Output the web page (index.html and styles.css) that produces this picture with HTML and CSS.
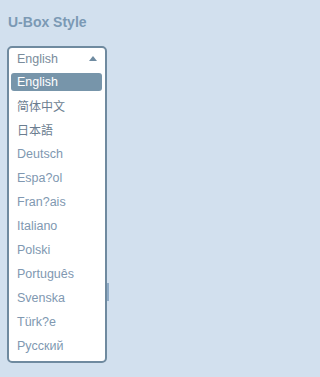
FILE: index.html
```html
<!DOCTYPE html>
<html>
<head>
<meta charset="utf-8">
<link rel="stylesheet" href="styles.css">
</head>
<body>
<div class="title">U-Box Style</div>
<div class="ubox">
  <div class="head"><span>English</span><span class="arrow"></span></div>
  <ul class="list">
    <li class="sel"><span>English</span></li>
    <li class="cjk"><span>简体中文</span></li>
    <li class="cjk"><span>日本語</span></li>
    <li><span>Deutsch</span></li>
    <li><span>Espa?ol</span></li>
    <li><span>Fran?ais</span></li>
    <li><span>Italiano</span></li>
    <li><span>Polski</span></li>
    <li><span>Português</span></li>
    <li><span>Svenska</span></li>
    <li><span>Türk?e</span></li>
    <li><span>Русский</span></li>
  </ul>
  <span class="peek"></span>
</div>
</body>
</html>
```
FILE: styles.css
```css
html, body { margin: 0; padding: 0; }
body {
  background: #d2e0ee;
  font-family: "Liberation Sans", Arial, sans-serif;
  padding: 15px 0 0 8px;
}
.title {
  font-size: 14px;
  font-weight: bold;
  color: #7b99b4;
  line-height: 15px;
  height: 15px;
}
.ubox {
  position: relative;
  margin: 16px 0 0 -1px;
  width: 96px;
  border: 2px solid #6f8a9f;
  border-radius: 5px;
  background: #fff;
  padding-bottom: 3px;
}
.head {
  height: 22px;
  display: flex;
  align-items: center;
  justify-content: space-between;
  padding: 0 8px 0 8px;
  font-size: 12.5px;
  color: #7a8c9b;
}
.arrow {
  width: 0; height: 0;
  border-left: 4.5px solid transparent;
  border-right: 4.5px solid transparent;
  border-bottom: 5px solid #6f8ba1;
  margin-top: -1px;
}
.list { list-style: none; margin: 0; padding: 0; }
.list li {
  height: 24px;
  display: flex;
  align-items: center;
  padding: 0 3px 0 2px;
  font-size: 12.5px;
  color: #8098b1;
}
.list li span { display: block; padding-left: 6px; line-height: 18px; flex: 1; }
.list li.cjk { color: #6b7d90; font-family: "Noto Sans CJK SC", "Liberation Sans", sans-serif; font-size: 12px; }
.list li.sel span {
  background: #7795aa;
  color: #fff;
  border-radius: 3px;
}
.peek {
  position: absolute;
  right: -4px;
  top: 235px;
  width: 2px;
  height: 18px;
  background: #8fabc6;
}
```
